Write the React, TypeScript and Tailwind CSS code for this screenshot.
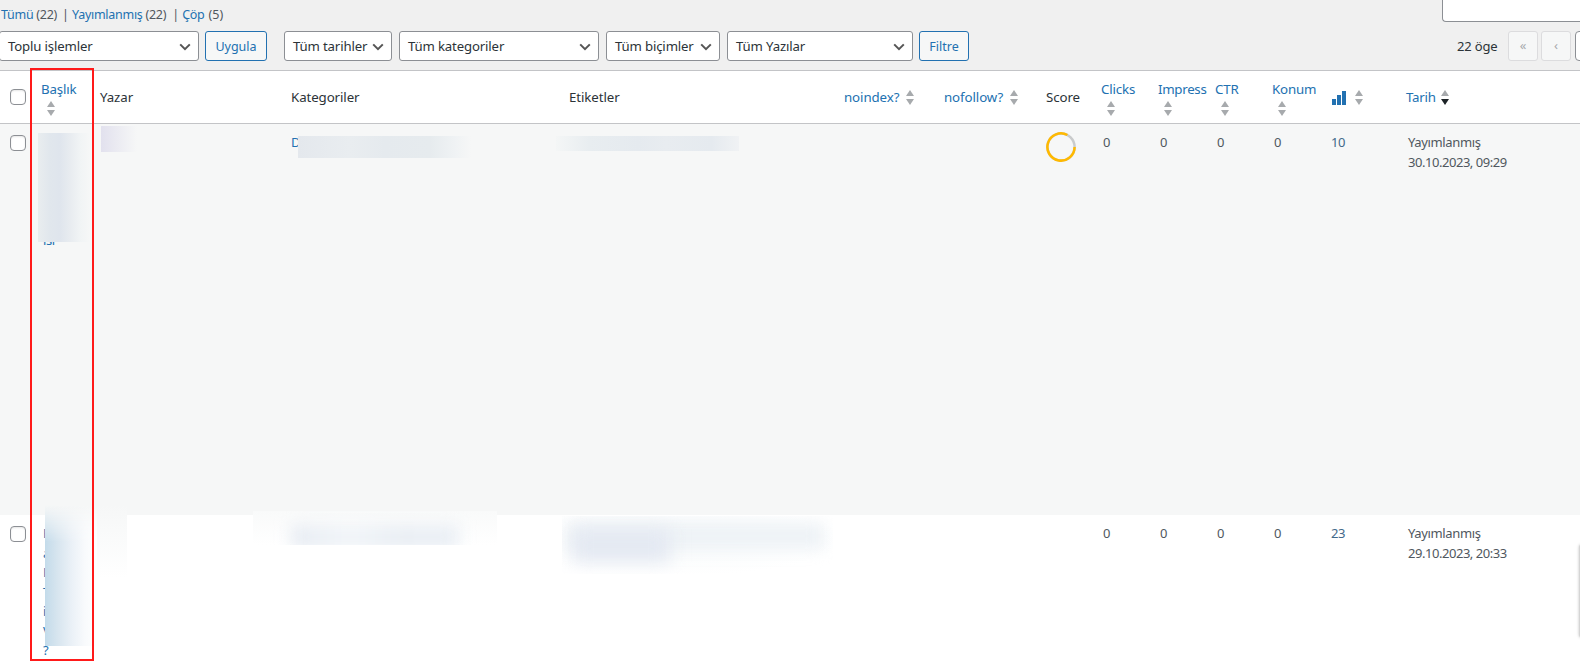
import type { ReactNode } from "react";

const GRID =
  "grid grid-cols-[31px_59px_191px_278px_275px_100px_102px_55px_57px_57px_57px_59px_75px_174px] pl-[10px]";

function Select({ label, className }: { label: string; className: string }) {
  return (
    <div
      className={`flex h-[30px] shrink-0 items-center justify-between rounded-[3px] border border-[#8c8f94] bg-white pr-[7px] pl-[8px] text-[13.2px] tracking-[-0.15px] text-[#2c3338] ${className}`}
    >
      <span className="pt-[2px] whitespace-nowrap">{label}</span>
      <svg width="12" height="8" viewBox="0 0 12 8" fill="none" className="mt-px shrink-0">
        <path d="M1.2 1.4 6 6.2 10.8 1.4" stroke="#555" strokeWidth="2" />
      </svg>
    </div>
  );
}

function Button({ label, className }: { label: string; className: string }) {
  return (
    <button
      className={`h-[30px] shrink-0 rounded-[3px] border border-[#2271b1] bg-[#f6f7f7] pt-[2px] text-[12.5px] text-[#2271b1] ${className}`}
    >
      {label}
    </button>
  );
}

function Sort({ desc = false }: { desc?: boolean }) {
  return (
    <svg width="8" height="15" viewBox="0 0 8 15" className="shrink-0">
      <path d="M4 0 8 6H0Z" fill="#a7aaad" />
      <path d="M0 9H8L4 15Z" fill={desc ? "#1d2327" : "#a7aaad"} />
    </svg>
  );
}

function Check() {
  return (
    <span className="block size-4 rounded-[4px] border border-[#8c8f94] bg-white shadow-[inset_0_1px_2px_rgba(0,0,0,0.1)]" />
  );
}

function Stacked({ children }: { children: ReactNode }) {
  return (
    <div className="flex h-[52px] flex-col pt-[8px]">
      <span className="h-[22px] leading-[20px] tracking-[-0.15px] whitespace-nowrap text-[#2271b1]">
        {children}
      </span>
      <span className="pl-[6px]">
        <Sort />
      </span>
    </div>
  );
}

function Plain({ children }: { children: ReactNode }) {
  return (
    <div className="flex h-[52px] items-center pt-px whitespace-nowrap">
      {children}
    </div>
  );
}

function Row({
  count,
  date,
  title,
  category,
  score,
  className,
}: {
  count: string;
  date: string;
  title?: ReactNode;
  category?: string;
  score?: ReactNode;
  className: string;
}) {
  return (
    <div className={`${GRID} text-[13px] leading-[19.5px] tracking-[-0.36px] text-[#50575e] ${className}`}>
      <div className="pt-[2px]">
        <Check />
      </div>
      <div className="overflow-hidden pl-[2px] text-[#2271b1]">{title}</div>
      <div />
      <div className="text-[#2271b1]">{category}</div>
      <div />
      <div />
      <div />
      <div>{score}</div>
      <div className="pl-[2px]">0</div>
      <div className="pl-[2px]">0</div>
      <div className="pl-[2px]">0</div>
      <div className="pl-[2px]">0</div>
      <div className="text-[#43698a]">{count}</div>
      <div className="pl-[2px]">
        <div>Yayımlanmış</div>
        <div className="tracking-[-0.46px]">{date}</div>
      </div>
    </div>
  );
}

export default function App() {
  return (
    <div className="relative flex h-[662px] w-[1580px] flex-col overflow-hidden bg-[#f0f0f0] font-['Noto_Sans',sans-serif] text-[13px] text-[#2c3338]">
      <div className="flex h-[31px] justify-between">
        <div className="flex gap-[5px] pt-[5px] pl-px text-[12.5px] leading-[20px] tracking-[-0.28px] whitespace-nowrap text-[#50575e]">
          <span>
            <span className="text-[#2271b1]">Tümü</span> (22)
          </span>
          <span className="w-[5px]">|</span>
          <span>
            <span className="text-[#2271b1]">Yayımlanmış</span> (22)
          </span>
          <span className="w-[5px] pl-px">|</span>
          <span className="pl-px">
            <span className="text-[#2271b1]">Çöp</span>
            <span className="pl-[4px] tracking-normal">(5)</span>
          </span>
        </div>
        <div className="h-[22px] w-[138px] rounded-bl-[4px] border-b border-l border-[#8c8f94] bg-white" />
      </div>

      <div className="flex h-[39px] items-start">
        <Select label="Toplu işlemler" className="-ml-px w-[200px]" />
        <Button label="Uygula" className="ml-[6px] w-[62px]" />
        <Select label="Tüm tarihler" className="ml-[17px] w-[108px]" />
        <Select label="Tüm kategoriler" className="ml-[7px] w-[200px]" />
        <Select label="Tüm biçimler" className="ml-[7px] w-[114px]" />
        <Select label="Tüm Yazılar" className="ml-[7px] w-[186px]" />
        <Button label="Filtre" className="ml-[6px] w-[50px]" />
        <span className="ml-[488px] w-[51px] shrink-0 leading-[31px] tracking-[-0.15px] whitespace-nowrap">
          22 öge
        </span>
        <span className="flex h-[30px] w-[30px] shrink-0 justify-center rounded-[3px] border border-[#dcdcde] bg-[#f6f7f7] pt-[4px] text-[#a7aaad]">
          «
        </span>
        <span className="ml-[3px] flex h-[30px] w-[30px] shrink-0 justify-center rounded-[3px] border border-[#dcdcde] bg-[#f6f7f7] pt-[4px] text-[#a7aaad]">
          ‹
        </span>
        <span className="ml-[4px] h-[30px] w-[20px] shrink-0 rounded-[4px] border border-[#8c8f94] bg-white" />
      </div>

      <div className={`${GRID} h-[54px] shrink-0 border-y border-[#c3c4c7] bg-white text-[13.3px] tracking-[-0.1px]`}>
        <div className="pt-[18px]">
          <Check />
        </div>
        <Stacked>Başlık</Stacked>
        <Plain>Yazar</Plain>
        <Plain>Kategoriler</Plain>
        <Plain>Etiketler</Plain>
        <Plain>
          <span className="w-[62px] text-[#2271b1]">noindex?</span>
          <span className="-mt-px flex">
            <Sort />
          </span>
        </Plain>
        <Plain>
          <span className="w-[66px] text-[#2271b1]">nofollow?</span>
          <span className="-mt-px flex">
            <Sort />
          </span>
        </Plain>
        <Plain>Score</Plain>
        <Stacked>Clicks</Stacked>
        <Stacked>
          <span className="tracking-[-0.3px]">Impress</span>
        </Stacked>
        <Stacked>CTR</Stacked>
        <Stacked>Konum</Stacked>
        <Plain>
          <svg width="15" height="14" viewBox="0 0 15 14" className="mr-[8px] ml-px">
            <path d="M0 8H4V14H0ZM5 4H9V14H5ZM10 0H14V14H10Z" fill="#2271b1" />
          </svg>
          <span className="-mt-px flex">
            <Sort />
          </span>
        </Plain>
        <Plain>
          <span className="w-[35px] tracking-[-0.25px] text-[#2271b1]">Tarih</span>
          <span className="-mt-px flex">
            <Sort desc />
          </span>
        </Plain>
      </div>

      <Row
        className="h-[391px] shrink-0 bg-[#f6f7f7] pt-[9px]"
        count="10"
        date="30.10.2023, 09:29"
        category="D"
        title={<div className="pt-[97.5px]">ısı</div>}
        score={
          <svg width="30" height="30" viewBox="0 0 30 30" fill="none" strokeWidth="2.5" className="-mt-px">
            <circle cx="15" cy="15" r="13.6" stroke="#c9cbcc" />
            <path d="M28.6 15A13.6 13.6 0 1 1 21.4 3" stroke="#ffb900" />
          </svg>
        }
      />
      <Row
        className="h-[147px] shrink-0 bg-white pt-[9px]"
        count="23"
        date="29.10.2023, 20:33"
        title={
          <>
            <div>B</div>
            <div>a</div>
            <div>L</div>
            <div>T</div>
            <div>i</div>
            <div>V</div>
            <div>?</div>
          </>
        }
      />

      <div className="absolute top-[133px] left-[38px] h-[109px] w-[52px] bg-[#f6f7f7]">
        <div className="h-full bg-[linear-gradient(90deg,#e9edef_0%,#e1e7ed_22%,#dfe5ed_42%,#e8ecf0_62%,#f1f4f5_82%,#f6f7f7_100%)]" />
      </div>
      <div className="absolute top-[126px] left-[101px] h-[26px] w-[36px] bg-[linear-gradient(90deg,#e2e1ee,#ebebf2_45%,#f6f7f7)]" />
      <div className="absolute top-[136px] left-[298px] h-[22px] w-[173px] bg-[linear-gradient(90deg,#e4e8ed,#e9edf0_30%,#e5eaee_50%,#e6ebee_76%,#eff2f4_90%,#f6f7f7)]" />
      <div className="absolute top-[136px] left-[556px] h-[15px] w-[183px] bg-[linear-gradient(90deg,#f4f6f6,#e8edf0_18%,#e5eaef_45%,#e8ecf0_60%,#e5eaef_85%,#f0f2f4)]" />

      <div className="absolute top-[505px] left-[45px] h-[141px] w-[82px] bg-[linear-gradient(180deg,#f6f7f7_0%,#f9fafa_18%,#ffffff_52%)]">
        <div className="h-full w-[52px] bg-[linear-gradient(90deg,#c3dbea_0%,#d7e5ef_24%,#ebf1f7_52%,#f8fafc_76%,#ffffff_100%)] [mask-image:linear-gradient(180deg,transparent_0%,black_26%)]" />
      </div>
      <div className="absolute top-[511px] left-[253px] h-[34px] w-[244px] overflow-hidden bg-[linear-gradient(180deg,#f9fafa,#ffffff)]">
        <div className="absolute top-[14px] left-[38px] h-[24px] w-[168px] bg-[linear-gradient(90deg,#e6ebf2,#f0f4f8_35%,#e8edf3_65%,#eaeff5)] blur-[8px]" />
      </div>
      <div className="absolute top-[516px] left-[562px] h-[58px] w-[271px] overflow-hidden bg-[radial-gradient(ellipse_at_40%_40%,#f8fafb,#ffffff_75%)]">
        <div className="absolute top-[7px] left-[6px] h-[26px] w-[256px] bg-[#edf2f6] blur-[8px]" />
        <div className="absolute top-[13px] left-[10px] h-[33px] w-[98px] bg-[#e4e9f2] blur-[9px]" />
      </div>
      <div className="absolute top-[544px] left-[1579px] h-[94px] w-[8px] rounded-[4px] bg-[#d5d5d5] shadow-[0_0_3px_rgba(0,0,0,0.25)]" />

      <div className="absolute top-[68px] left-[30px] h-[593px] w-[64px] border-2 border-[#ff1a1a]" />
    </div>
  );
}
